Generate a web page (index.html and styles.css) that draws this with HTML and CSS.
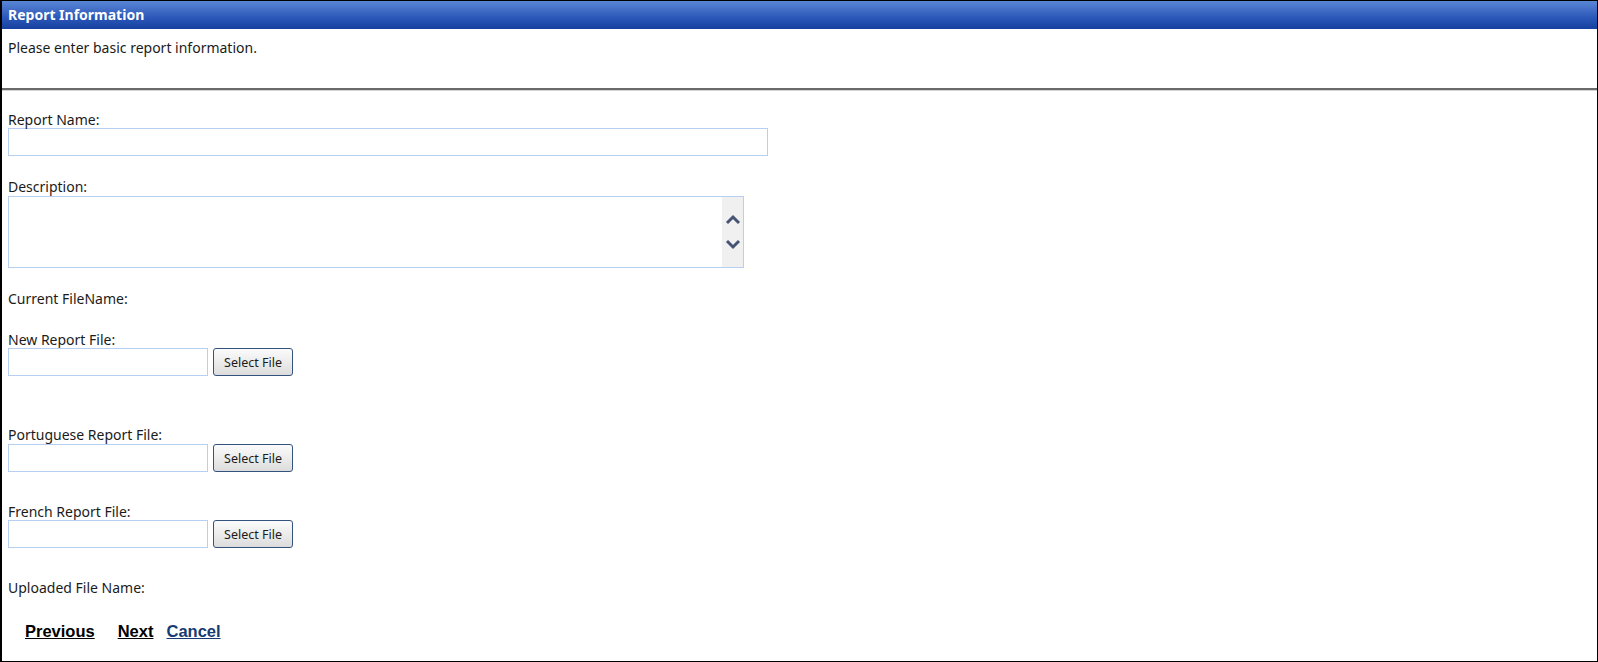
FILE: index.html
```html
<!DOCTYPE HTML>
<html>
<head>
<meta charset="utf-8">
<title>Report Information</title>
<link rel="stylesheet" href="styles.css">
</head>
<body>
	<div class="frame">
		<div class="head">Report Information</div>
		<div class="intro">Please enter basic report information.</div>
		<div class="form">
			<div class="lbl mt-name">Report Name:</div>
			<input class="txt wide" type="text">

			<div class="lbl mt-desc">Description:</div>
			<div class="area">
				<textarea></textarea>
				<div class="spin">
					<svg width="16" height="11" viewBox="0 0 16 11"><path d="M2 9 L8 3 L14 9" fill="none" stroke="#475372" stroke-width="3"/></svg>
					<svg width="16" height="11" viewBox="0 0 16 11"><path d="M2 2 L8 8 L14 2" fill="none" stroke="#475372" stroke-width="3"/></svg>
				</div>
			</div>

			<div class="lbl mt-cur">Current FileName:</div>

			<div class="lbl mt-new">New Report File:</div>
			<div class="filerow">
				<input class="txt small" type="text">
				<button class="btn">Select File</button>
			</div>

			<div class="lbl mt-pt">Portuguese Report File:</div>
			<div class="filerow r-pt">
				<input class="txt small" type="text">
				<button class="btn">Select File</button>
			</div>

			<div class="lbl mt-fr">French Report File:</div>
			<div class="filerow">
				<input class="txt small" type="text">
				<button class="btn">Select File</button>
			</div>

			<div class="lbl mt-up">Uploaded File Name:</div>

			<div class="nav">
				<a href="#" class="prev">Previous</a>
				<a href="#" class="next">Next</a>
				<a href="#" class="cancel">Cancel</a>
			</div>
		</div>
	</div>
</body>
</html>
```

FILE: styles.css
```css
*{
	margin: 0;
	padding: 0;
	box-sizing: border-box;
}
body{
	font-family: "Noto Sans", "Open Sans", sans-serif;
	font-size: 14px;
	color: #1b1b1b;
	background: #fff;
}
.frame{
	width: 1598px;
	height: 662px;
	border: 1px solid #000;
	border-left-width: 2px;
}
.head{
	height: 28px;
	line-height: 27px;
	padding-left: 6px;
	color: #fff;
	font-weight: bold;
	font-size: 14px;
	background: linear-gradient(#5a86d6, #2b57b8 60%, #1641a0);
}
.intro{
	height: 61px;
	padding: 10px 6px 0;
	line-height: 17px;
	border-bottom: 2px solid #6a6a6a;
	box-shadow: 0 1px 0 #d4d4d4;
}
.form{
	padding: 0 6px;
}
.lbl{
	line-height: 17px;
}
.mt-name{ margin-top: 21px; }
.mt-desc{ margin-top: 22px; }
.mt-cur{ margin-top: 22px; }
.mt-new{ margin-top: 24px; }
.mt-pt{ margin-top: 50px; }
.mt-fr{ margin-top: 31px; }
.mt-up{ margin-top: 31px; }

.txt{
	display: block;
	height: 28px;
	border: 1px solid #b6cff3;
	font: inherit;
	outline: none;
}
.wide{
	width: 760px;
}
.area{
	display: flex;
	width: 736px;
	height: 72px;
	margin-top: 1px;
	border: 1px solid #b6cff3;
}
.area textarea{
	flex: 1;
	border: none;
	resize: none;
	outline: none;
	font: inherit;
}
.spin{
	width: 21px;
	background: #f0f0f0;
	display: flex;
	flex-direction: column;
	align-items: center;
	justify-content: center;
	gap: 14px;
}
.filerow{
	display: flex;
	gap: 5px;
}
.r-pt{ margin-top: 1px; }
.small{
	width: 200px;
}
.btn{
	width: 80px;
	height: 28px;
	border: 1px solid #34527e;
	border-radius: 3px;
	background: linear-gradient(#fbfbfb, #ececec 50%, #dcdcdc);
	font-family: "Noto Sans", "Open Sans", sans-serif;
	font-size: 12.5px;
	color: #1b1b1b;
}
.nav{
	display: flex;
	margin-top: 27px;
	padding-left: 17px;
	line-height: 17px;
}
.nav a{
	font-family: "Liberation Sans", Arial, sans-serif;
	font-weight: bold;
	font-size: 16.5px;
	text-decoration: underline;
	color: #000;
}
.nav .next{
	margin-left: 23px;
}
.nav .cancel{
	margin-left: 13px;
	color: #163a72;
}
```
